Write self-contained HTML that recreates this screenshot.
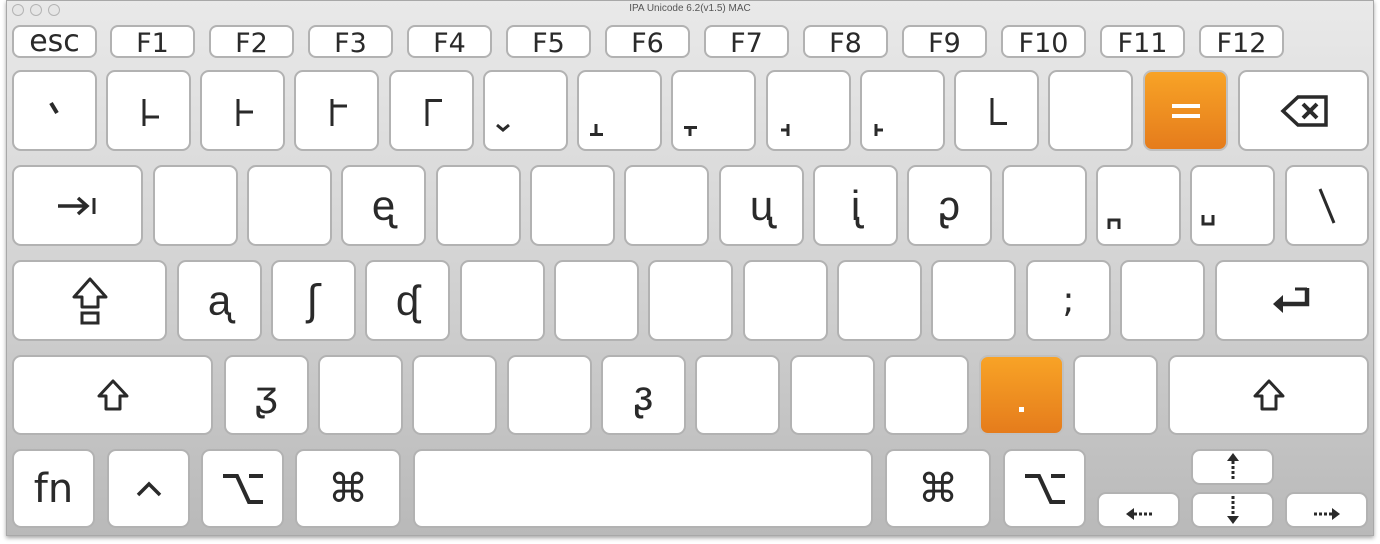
<!DOCTYPE html>
<html><head><meta charset="utf-8"><style>
*{margin:0;padding:0;box-sizing:border-box}
body{width:1380px;height:544px;background:#fff;position:relative;overflow:hidden;font-family:"Liberation Sans","DejaVu Sans",sans-serif;color:#2a2a2a}
#win{position:absolute;left:6px;top:0;width:1368px;height:536px;background:linear-gradient(#e9e9e9,#d8d8d8 40%,#b9b9b9);border:1px solid #a8a8a8;box-shadow:0 2px 4px rgba(0,0,0,.35)}
.tl{position:absolute;top:4px;width:12px;height:12px;border-radius:50%;border:1px solid #b4b4b4;background:#e6e6e6}
#title{position:absolute;top:3px;left:0;width:1380px;text-align:center;font-size:10px;color:#555}
.k{position:absolute;background:#fff;border:2px solid #b2b2b2;border-radius:9px;display:flex;align-items:center;justify-content:center;font-size:42px;font-family:"DejaVu Sans","Liberation Sans",sans-serif}
.f{font-size:27px;font-family:"DejaVu Sans",sans-serif;border-radius:8px;padding-top:4px}
.o{background:linear-gradient(#f8a326,#e57c1c);color:#fff;border-color:#c0c0c0}
svg{display:block}
</style></head><body>
<div id="win"></div>
<div class="tl" style="left:12px"></div><div class="tl" style="left:30px"></div><div class="tl" style="left:48px"></div>
<div id="title">IPA Unicode 6.2(v1.5) MAC</div>

<div class="k f" style="left:12px;top:25px;width:85px;height:33px;font-size:30px;padding-top:0">esc</div>
<div class="k f" style="left:110px;top:25px;width:85px;height:33px">F1</div>
<div class="k f" style="left:209px;top:25px;width:85px;height:33px">F2</div>
<div class="k f" style="left:308px;top:25px;width:85px;height:33px">F3</div>
<div class="k f" style="left:407px;top:25px;width:85px;height:33px">F4</div>
<div class="k f" style="left:506px;top:25px;width:85px;height:33px">F5</div>
<div class="k f" style="left:605px;top:25px;width:85px;height:33px">F6</div>
<div class="k f" style="left:704px;top:25px;width:85px;height:33px">F7</div>
<div class="k f" style="left:803px;top:25px;width:85px;height:33px">F8</div>
<div class="k f" style="left:902px;top:25px;width:85px;height:33px">F9</div>
<div class="k f" style="left:1001px;top:25px;width:85px;height:33px">F10</div>
<div class="k f" style="left:1100px;top:25px;width:85px;height:33px">F11</div>
<div class="k f" style="left:1199px;top:25px;width:85px;height:33px">F12</div>

<!-- row 1 -->
<div class="k" style="left:12px;top:70px;width:85px;height:81px"><svg width="20" height="40"><path d="M6 12L12 22" stroke="#2a2a2a" stroke-width="4"/></svg></div>
<div class="k" style="left:106px;top:70px;width:85px;height:81px"><svg width="30" height="40"><path d="M10 8V35M10 26H25" stroke="#2a2a2a" stroke-width="3" fill="none"/></svg></div>
<div class="k" style="left:200px;top:70px;width:85px;height:81px"><svg width="30" height="40"><path d="M10 8V35M10 21H25" stroke="#2a2a2a" stroke-width="3" fill="none"/></svg></div>
<div class="k" style="left:294px;top:70px;width:85px;height:81px"><svg width="30" height="40"><path d="M10 8V35M10 15H25" stroke="#2a2a2a" stroke-width="3" fill="none"/></svg></div>
<div class="k" style="left:389px;top:70px;width:85px;height:81px"><svg width="30" height="40"><path d="M10 35V9.5H25" stroke="#2a2a2a" stroke-width="3" fill="none"/></svg></div>
<div class="k" style="left:483px;top:70px;width:85px;height:81px"><svg style="position:absolute;left:10px;top:50px" width="20" height="14"><path d="M2 3L8 8L14 3" stroke="#2a2a2a" stroke-width="3" fill="none"/></svg></div>
<div class="k" style="left:577px;top:70px;width:85px;height:81px"><svg style="position:absolute;left:10px;top:50px" width="20" height="16"><path d="M7 2V14M1 12.5H14" stroke="#2a2a2a" stroke-width="3" fill="none"/></svg></div>
<div class="k" style="left:671px;top:70px;width:85px;height:81px"><svg style="position:absolute;left:10px;top:50px" width="20" height="16"><path d="M7 4V14M1 5.5H14" stroke="#2a2a2a" stroke-width="3" fill="none"/></svg></div>
<div class="k" style="left:766px;top:70px;width:85px;height:81px"><svg style="position:absolute;left:10px;top:50px" width="20" height="16"><path d="M10 2V14M3 8H10" stroke="#2a2a2a" stroke-width="3" fill="none"/></svg></div>
<div class="k" style="left:860px;top:70px;width:85px;height:81px"><svg style="position:absolute;left:10px;top:50px" width="20" height="16"><path d="M4 2V14M4 8H11" stroke="#2a2a2a" stroke-width="3" fill="none"/></svg></div>
<div class="k" style="left:954px;top:70px;width:85px;height:81px"><svg width="30" height="40"><path d="M10 7V32.5H25" stroke="#2a2a2a" stroke-width="3" fill="none"/></svg></div>
<div class="k" style="left:1048px;top:70px;width:85px;height:81px"></div>
<div class="k o" style="left:1143px;top:70px;width:85px;height:81px"><svg width="30" height="20"><path d="M1 5H29M1 15H29" stroke="#fff" stroke-width="4"/></svg></div>
<div class="k" style="left:1238px;top:70px;width:131px;height:81px"><svg width="50" height="36"><path d="M47 4H19L4 18L19 32H47Z" stroke="#2a2a2a" stroke-width="3.5" fill="none"/><path d="M24 11L38 25M38 11L24 25" stroke="#2a2a2a" stroke-width="4"/></svg></div>

<!-- row 2 -->
<div class="k" style="left:12px;top:165px;width:131px;height:81px"><svg width="44" height="24"><path d="M2 12H30M22 4L31 12L22 20" stroke="#2a2a2a" stroke-width="3.5" fill="none"/><path d="M38 4V20" stroke="#2a2a2a" stroke-width="3"/></svg></div>
<div class="k" style="left:153px;top:165px;width:85px;height:81px"></div>
<div class="k" style="left:247px;top:165px;width:85px;height:81px"></div>
<div class="k" style="left:341px;top:165px;width:85px;height:81px">ᶒ</div>
<div class="k" style="left:436px;top:165px;width:85px;height:81px"></div>
<div class="k" style="left:530px;top:165px;width:85px;height:81px"></div>
<div class="k" style="left:624px;top:165px;width:85px;height:81px"></div>
<div class="k" style="left:719px;top:165px;width:85px;height:81px">ᶙ</div>
<div class="k" style="left:813px;top:165px;width:85px;height:81px">ᶖ</div>
<div class="k" style="left:907px;top:165px;width:85px;height:81px">ᶗ</div>
<div class="k" style="left:1002px;top:165px;width:85px;height:81px"></div>
<div class="k" style="left:1096px;top:165px;width:85px;height:81px"><svg style="position:absolute;left:9px;top:50px" width="20" height="14"><path d="M2 12V3H12V12" stroke="#2a2a2a" stroke-width="3" fill="none"/></svg></div>
<div class="k" style="left:1190px;top:165px;width:85px;height:81px"><svg style="position:absolute;left:9px;top:46px" width="20" height="14"><path d="M2 2V11H12V2" stroke="#2a2a2a" stroke-width="3" fill="none"/></svg></div>
<div class="k" style="left:1285px;top:165px;width:84px;height:81px"><svg width="30" height="50"><path d="M8 8L22 42" stroke="#2a2a2a" stroke-width="3"/></svg></div>

<!-- row 3 -->
<div class="k" style="left:12px;top:260px;width:155px;height:81px"><svg width="40" height="52"><path d="M20 4L4 22H12V32H28V22H36Z" stroke="#2a2a2a" stroke-width="3" fill="none" stroke-linejoin="round"/><path d="M12 38H28V48H12Z" stroke="#2a2a2a" stroke-width="3" fill="none"/></svg></div>
<div class="k" style="left:177px;top:260px;width:85px;height:81px">ᶏ</div>
<div class="k" style="left:271px;top:260px;width:85px;height:81px">ʃ</div>
<div class="k" style="left:365px;top:260px;width:85px;height:81px">ᶑ</div>
<div class="k" style="left:460px;top:260px;width:85px;height:81px"></div>
<div class="k" style="left:554px;top:260px;width:85px;height:81px"></div>
<div class="k" style="left:648px;top:260px;width:85px;height:81px"></div>
<div class="k" style="left:743px;top:260px;width:85px;height:81px"></div>
<div class="k" style="left:837px;top:260px;width:85px;height:81px"></div>
<div class="k" style="left:931px;top:260px;width:85px;height:81px"></div>
<div class="k" style="left:1026px;top:260px;width:85px;height:81px;font-size:36px">;</div>
<div class="k" style="left:1120px;top:260px;width:85px;height:81px"></div>
<div class="k" style="left:1215px;top:260px;width:154px;height:81px"><svg width="46" height="34"><path d="M38 4V20H10" stroke="#2a2a2a" stroke-width="4.5" fill="none"/><path d="M4 20L14 11V29Z" fill="#2a2a2a"/><path d="M26 5H38" stroke="#2a2a2a" stroke-width="3"/></svg></div>

<!-- row 4 -->
<div class="k" style="left:12px;top:355px;width:201px;height:80px"><svg width="34" height="34"><path d="M17 3L3 18H10V31H24V18H31Z" stroke="#2a2a2a" stroke-width="3" fill="none" stroke-linejoin="round"/></svg></div>
<div class="k" style="left:224px;top:355px;width:85px;height:80px">ᶚ</div>
<div class="k" style="left:318px;top:355px;width:85px;height:80px"></div>
<div class="k" style="left:412px;top:355px;width:85px;height:80px"></div>
<div class="k" style="left:507px;top:355px;width:85px;height:80px"></div>
<div class="k" style="left:601px;top:355px;width:85px;height:80px">ᶔ</div>
<div class="k" style="left:695px;top:355px;width:85px;height:80px"></div>
<div class="k" style="left:790px;top:355px;width:85px;height:80px"></div>
<div class="k" style="left:884px;top:355px;width:85px;height:80px"></div>
<div class="k o" style="left:979px;top:355px;width:85px;height:80px"><svg width="10" height="40"><rect x="2" y="32" width="5" height="5" fill="#fff"/></svg></div>
<div class="k" style="left:1073px;top:355px;width:85px;height:80px"></div>
<div class="k" style="left:1168px;top:355px;width:201px;height:80px"><svg width="34" height="34"><path d="M17 3L3 18H10V31H24V18H31Z" stroke="#2a2a2a" stroke-width="3" fill="none" stroke-linejoin="round"/></svg></div>

<!-- row 5 -->
<div class="k" style="left:12px;top:449px;width:83px;height:79px;font-size:40px">fn</div>
<div class="k" style="left:107px;top:449px;width:83px;height:79px"><svg width="30" height="20"><path d="M4 16L15 5L26 16" stroke="#2a2a2a" stroke-width="3.5" fill="none"/></svg></div>
<div class="k" style="left:201px;top:449px;width:83px;height:79px"><svg width="44" height="34"><path d="M2 4H16L28 30H42M28 4H42" stroke="#2a2a2a" stroke-width="4" fill="none"/></svg></div>
<div class="k" style="left:295px;top:449px;width:106px;height:79px;font-size:40px">⌘</div>
<div class="k" style="left:413px;top:449px;width:460px;height:79px"></div>
<div class="k" style="left:885px;top:449px;width:106px;height:79px;font-size:40px">⌘</div>
<div class="k" style="left:1003px;top:449px;width:83px;height:79px"><svg width="44" height="34"><path d="M2 4H16L28 30H42M28 4H42" stroke="#2a2a2a" stroke-width="4" fill="none"/></svg></div>
<div class="k" style="left:1097px;top:492px;width:83px;height:36px;align-items:flex-end;padding-bottom:6px"><svg width="30" height="12"><path d="M10 6H28" stroke="#2a2a2a" stroke-width="3" stroke-dasharray="3 2"/><path d="M2 6L10 0V12Z" fill="#2a2a2a"/></svg></div>
<div class="k" style="left:1191px;top:449px;width:83px;height:36px"><svg width="12" height="28"><path d="M6 8V28" stroke="#2a2a2a" stroke-width="3" stroke-dasharray="3 2"/><path d="M6 0L0 8H12Z" fill="#2a2a2a"/></svg></div>
<div class="k" style="left:1191px;top:492px;width:83px;height:36px"><svg width="12" height="28"><path d="M6 0V20" stroke="#2a2a2a" stroke-width="3" stroke-dasharray="3 2"/><path d="M6 28L0 20H12Z" fill="#2a2a2a"/></svg></div>
<div class="k" style="left:1285px;top:492px;width:83px;height:36px;align-items:flex-end;padding-bottom:6px"><svg width="30" height="12"><path d="M2 6H20" stroke="#2a2a2a" stroke-width="3" stroke-dasharray="3 2"/><path d="M28 6L20 0V12Z" fill="#2a2a2a"/></svg></div>
</body></html>
